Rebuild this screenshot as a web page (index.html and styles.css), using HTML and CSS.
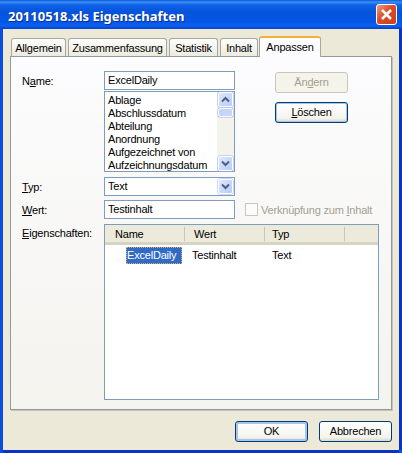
FILE: index.html
```html
<!DOCTYPE HTML>
<html lang="de">
<head>
<meta name="viewport" content="width=device-width, initial-scale=1">
<title>20110518.xls Eigenschaften</title>
<link rel="stylesheet" href="styles.css">
</head>
<body>

<div class="window">
  <div class="titlebar">
    <span class="title">20110518.xls Eigenschaften</span>
    <span class="close-btn">
      <svg width="13" height="13" viewBox="0 0 13 13"><path d="M2 2 L11 11 M11 2 L2 11" stroke="#fff" stroke-width="2.6" fill="none"/></svg>
    </span>
  </div>

  <div class="content">
    <div class="tabs">
      <span class="tab tab-allgemein">Allgemein</span>
      <span class="tab tab-zusammen">Zusammenfassung</span>
      <span class="tab tab-statistik">Statistik</span>
      <span class="tab tab-inhalt">Inhalt</span>
      <span class="tab tab-active">Anpassen</span>
    </div>

    <div class="panel">
      <div class="form-grid">
        <label class="field-label"><span>N<u>a</u>me:</span></label>
        <div class="input input-name">ExcelDaily</div>
        <div class="side-buttons">
          <span class="button button-disabled">Än<u>d</u>ern</span>
          <span class="button button-focus"><u>L</u>öschen</span>
        </div>

        <div class="listbox">
          <ul class="list-items">
            <li>Ablage</li>
            <li>Abschlussdatum</li>
            <li>Abteilung</li>
            <li>Anordnung</li>
            <li>Aufgezeichnet von</li>
            <li>Aufzeichnungsdatum</li>
          </ul>
          <div class="scrollbar">
            <span class="scroll-btn">
              <svg width="9" height="7" viewBox="0 0 9 7"><path d="M1 5.5 L4.5 2 L8 5.5" stroke="#4d6185" stroke-width="2" fill="none"/></svg>
            </span>
            <span class="scroll-thumb"></span>
            <span class="scroll-spacer"></span>
            <span class="scroll-btn">
              <svg width="9" height="7" viewBox="0 0 9 7"><path d="M1 1.5 L4.5 5 L8 1.5" stroke="#4d6185" stroke-width="2" fill="none"/></svg>
            </span>
          </div>
        </div>

        <label class="field-label row-typ"><span><u>T</u>yp:</span></label>
        <div class="input row-typ combo">
          <span>Text</span>
          <span class="scroll-btn combo-btn">
            <svg width="9" height="7" viewBox="0 0 9 7"><path d="M1 1.5 L4.5 5 L8 1.5" stroke="#4d6185" stroke-width="2" fill="none"/></svg>
          </span>
        </div>

        <label class="field-label row-wert"><span><u>W</u>ert:</span></label>
        <div class="input row-wert">Testinhalt</div>
        <div class="link-option row-wert">
          <span class="checkbox"></span>
          <span>Verknüpfung zum <u>I</u>nhalt</span>
        </div>

        <label class="field-label row-props props-label"><span><u>E</u>igenschaften:</span></label>
        <div class="props row-props">
          <div class="props-head">
            <span class="head-cell col-name">Name</span>
            <span class="head-cell col-wert">Wert</span>
            <span class="head-cell col-typ">Typ</span>
            <span class="head-cell col-rest"></span>
          </div>
          <div class="props-row">
            <span class="col-name"><span class="selected">ExcelDaily</span></span>
            <span class="col-wert cell-wert">Testinhalt</span>
            <span class="col-typ cell-typ">Text</span>
          </div>
        </div>
      </div>
    </div>

    <div class="footer">
      <span class="button button-default">OK</span>
      <span class="button">Abbrechen</span>
    </div>
  </div>
</div>

</body>
</html>
```

FILE: styles.css
```css
/* Overall window */
html, body {
  margin: 0;
  padding: 0;
}

body {
  width: 402px;
  height: 453px;
  overflow: hidden;
  font-family: "Liberation Sans", sans-serif;
  font-size: 11px;
  letter-spacing: -0.2px;
  color: #000000;
}

.window {
  width: 402px;
  height: 453px;
  display: flex;
  flex-direction: column;
  background: linear-gradient(90deg, #0a4ee0, #0855dd);
}

/* Title bar */
.titlebar {
  height: 29px;
  flex: none;
  display: flex;
  align-items: center;
  justify-content: space-between;
  padding: 0 5px 0 8px;
  background: linear-gradient(180deg, #0a58d8 0, #3c8ef5 2px, #0f62e6 5px, #0453dd 12px, #0558e6 22px, #0a5ef0 26px, #0341c8 29px);
}

.title {
  color: #ffffff;
  font-family: "Noto Sans", sans-serif;
  font-weight: bold;
  font-size: 13px;
  letter-spacing: 0;
  padding-top: 2px;
  text-shadow: 1px 1px 0 #0f2d8a;
}

.close-btn {
  width: 19px;
  height: 19px;
  display: flex;
  align-items: center;
  justify-content: center;
  border: 1px solid #ffffff;
  border-radius: 3px;
  background: linear-gradient(135deg, #ee9a80, #db4c26 45%, #c8401c);
}

/* Dialog body */
.content {
  flex: 1;
  margin: 0 3px 3px 3px;
  padding: 7px 7px 0 7px;
  background: #ece9d8;
  display: flex;
  flex-direction: column;
  box-shadow: 3px 0 0 #0734c4, 0 3px 0 #0734c4;
}

/* Tabs */
.tabs {
  display: flex;
  align-items: flex-end;
  height: 20px;
  padding-left: 1px;
  gap: 2px;
  position: relative;
  z-index: 2;
}

.tab {
  height: 18px;
  line-height: 18px;
  text-align: center;
  border: 1px solid #a5a9a4;
  border-bottom: none;
  border-radius: 3px 3px 0 0;
  background: linear-gradient(180deg, #fdfdfb, #ecebe0);
  box-sizing: border-box;
}

.tab-allgemein { width: 55px; }
.tab-zusammen { width: 99px; }
.tab-statistik { width: 49px; }
.tab-inhalt { width: 38px; }

.tab-active {
  width: 62px;
  height: 21px;
  line-height: 19px;
  margin-left: -1px;
  margin-bottom: -1px;
  border-top: 2px solid #f4b13a;
  background: #fcfcfe;
}

/* Panel */
.panel {
  width: 382px;
  height: 354px;
  box-sizing: border-box;
  border: 1px solid #919b9c;
  box-shadow: 1px 1px 0 #c4c4bc;
  background: linear-gradient(180deg, #fcfcfe, #f4f3ee);
  padding: 14px 11px 0 11px;
}

.form-grid {
  display: grid;
  grid-template-columns: 82px 131px 1fr;
  grid-template-rows: 20px 81px auto auto auto;
  column-gap: 0;
}

.field-label {
  grid-column: 1;
  display: flex;
  align-items: center;
  height: 19px;
}

.input {
  grid-column: 2;
  height: 19px;
  line-height: 17px;
  box-sizing: border-box;
  border: 1px solid #7f9db9;
  background: #ffffff;
  padding-left: 3px;
}

.input-name {
  grid-row: 1;
}

.side-buttons {
  grid-column: 3;
  grid-row: 1 / span 2;
  display: flex;
  flex-direction: column;
  gap: 9px;
  padding: 1px 0 0 40px;
}

/* Buttons */
.button {
  width: 73px;
  height: 21px;
  line-height: 19px;
  text-align: center;
  box-sizing: border-box;
  border: 1px solid #003c74;
  border-radius: 3px;
  background: linear-gradient(180deg, #ffffff, #f4f4ee 80%, #dcd8c9);
}

.button-disabled {
  color: #a1a192;
  border-color: #c9c7ba;
  background: #f5f4ea;
}

.button-focus {
  box-shadow: inset 0 0 0 1px #a9c4ec;
}

.button-default {
  box-shadow: inset 0 0 0 2px #a9c4ec;
}

/* List with scrollbar */
.listbox {
  grid-column: 2;
  grid-row: 2;
  height: 81px;
  display: flex;
  box-sizing: border-box;
  border: 1px solid #7f9db9;
  background: #ffffff;
}

.list-items {
  flex: 1;
  margin: 0;
  padding: 2px 0 0 3px;
  list-style: none;
}

.list-items li {
  height: 13px;
  line-height: 13px;
}

.scrollbar {
  width: 17px;
  display: flex;
  flex-direction: column;
  align-items: center;
  background: #f3f2ec;
}

.scroll-btn {
  width: 15px;
  height: 15px;
  flex: none;
  display: flex;
  align-items: center;
  justify-content: center;
  box-sizing: border-box;
  border: 1px solid #ffffff;
  border-radius: 2px;
  background: linear-gradient(135deg, #dde8fe, #b5cbf9);
  box-shadow: 0 0 0 0.5px #9cb4e4;
}

.scroll-thumb {
  width: 15px;
  height: 9px;
  margin-top: 1px;
  flex: none;
  box-sizing: border-box;
  border: 1px solid #ffffff;
  border-radius: 2px;
  background: #c5d6fb;
  box-shadow: 0 0 0 0.5px #9cb4e4;
}

.scroll-spacer {
  flex: 1;
}

/* Combo */
.combo {
  display: flex;
  align-items: center;
  justify-content: space-between;
  padding-right: 1px;
}

.combo-btn {
  height: 15px;
}

.row-typ {
  grid-row: 3;
  margin-top: 5px;
}

.row-wert {
  grid-row: 4;
  margin-top: 4px;
}

.link-option {
  grid-column: 3;
  display: flex;
  align-items: center;
  gap: 3px;
  padding-left: 10px;
  color: #a1a192;
  height: 19px;
  white-space: nowrap;
}

.checkbox {
  width: 13px;
  height: 13px;
  box-sizing: border-box;
  border: 1px solid #c9c7ba;
  background: #fcfcfa;
}

/* Properties list */
.row-props {
  grid-row: 5;
  margin-top: 5px;
}

.props-label {
  align-items: flex-start;
  padding-top: 3px;
  height: auto;
}

.props {
  grid-column: 2 / span 2;
  width: 275px;
  height: 176px;
  box-sizing: border-box;
  border: 1px solid #7f9db9;
  background: #ffffff;
}

.props-head {
  display: flex;
  height: 20px;
  line-height: 18px;
  box-sizing: border-box;
  background: #ebeadb;
  border-bottom: 3px solid #d6d3c4;
}

.head-cell {
  box-sizing: border-box;
  padding-left: 10px;
  border-right: 1px solid #c7c5b2;
  height: 14px;
  line-height: 14px;
  margin-top: 2px;
}

.col-name { width: 80px; flex: none; }
.col-wert { width: 80px; flex: none; box-sizing: border-box; }
.col-typ { width: 80px; flex: none; box-sizing: border-box; }
.col-rest { flex: 1; border-right: none; }

.head-cell.col-wert { padding-left: 9px; }
.head-cell.col-typ { padding-left: 7px; }

.props-row {
  display: flex;
  height: 17px;
  line-height: 19px;
  margin-top: 1px;
}

.selected {
  display: inline-block;
  margin-left: 21px;
  width: 56px;
  padding-left: 1px;
  height: 17px;
  line-height: 17px;
  box-sizing: border-box;
  background: #316ac5;
  color: #ffffff;
  outline: 1px dotted #d8b06a;
  outline-offset: -1px;
}

.cell-wert { padding-left: 7px; }
.cell-typ { padding-left: 7px; }

/* Footer buttons */
.footer {
  display: flex;
  justify-content: flex-end;
  gap: 11px;
  padding: 11px 0 0 0;
}
```
